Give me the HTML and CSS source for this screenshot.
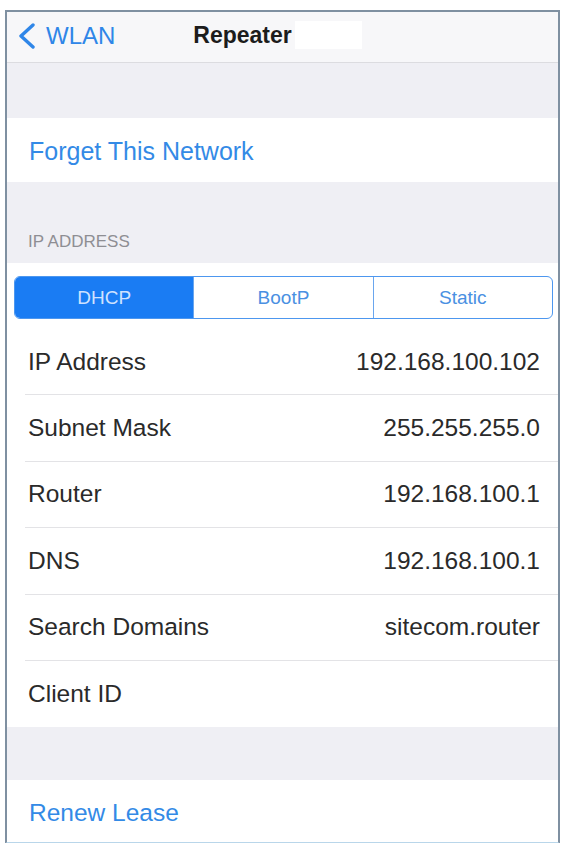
FILE: index.html
```html
<!DOCTYPE html>
<html lang="en">
<head>
  <meta charset="UTF-8">
  <title>Repeater</title>
  <link rel="stylesheet" href="styles.css">
</head>
<body>
  <div class="screen">
    <div class="navbar">
      <a class="back" href="#">
        <svg class="chevron" width="20" height="26" viewBox="0 0 20 26">
          <path d="M16 2 L4 13 L16 24" fill="none" stroke="currentColor" stroke-width="3.4" stroke-linecap="round" stroke-linejoin="round"/>
        </svg>
        <span>WLAN</span>
      </a>
      <div class="title">Repeater<span class="mask"></span></div>
      <div></div>
    </div>

    <div class="spacer"></div>

    <div class="cell action forget">Forget This Network</div>

    <div class="section-header">IP ADDRESS</div>

    <div class="segment-wrap">
      <div class="segmented">
        <div class="segment selected">DHCP</div>
        <div class="segment">BootP</div>
        <div class="segment">Static</div>
      </div>
    </div>

    <div class="group">
      <div class="row"><span>IP Address</span><span>192.168.100.102</span></div>
      <div class="row"><span>Subnet Mask</span><span>255.255.255.0</span></div>
      <div class="row"><span>Router</span><span>192.168.100.1</span></div>
      <div class="row"><span>DNS</span><span>192.168.100.1</span></div>
      <div class="row"><span>Search Domains</span><span>sitecom.router</span></div>
      <div class="row last"><span>Client ID</span><span></span></div>
    </div>

    <div class="spacer short"></div>

    <div class="cell action renew">Renew Lease</div>
  </div>
</body>
</html>
```

FILE: styles.css
```css
* {
  margin: 0;
  padding: 0;
  box-sizing: border-box;
}

body {
  font-family: 'Liberation Sans', Arial, sans-serif;
  background-color: #ffffff;
  color: #2a2a2a;
  overflow: hidden;
}

.screen {
  margin: 10px 0 0 5px;
  width: 555px;
  height: 834px;
  border: 2px solid #7f90a1;
  border-bottom-color: #b9d6ea;
  background-color: #efeff4;
  overflow: hidden;
}

/* top bar */
.navbar {
  height: 51px;
  background-color: #f7f7f9;
  border-bottom: 1px solid #dcdce0;
  display: grid;
  grid-template-columns: 1fr auto 1fr;
  align-items: center;
}

.back {
  display: flex;
  align-items: center;
  gap: 9px;
  padding-left: 10px;
  color: #2f86e8;
  text-decoration: none;
  font-size: 24px;
  margin-top: -3px;
}

.chevron {
  display: block;
}

.title {
  font-size: 23px;
  font-weight: bold;
  color: #1c1c1c;
  display: flex;
  align-items: center;
  margin: -4px 10px 0 0;
}

.mask {
  display: inline-block;
  width: 67px;
  height: 28px;
  margin-left: 3px;
  background-color: #ffffff;
}

.spacer {
  height: 55px;
}

.spacer.short {
  height: 53px;
}

.cell {
  background-color: #ffffff;
  height: 64px;
  display: flex;
  align-items: center;
  padding-left: 22px;
  font-size: 25px;
}

.action {
  color: #338ae6;
}

.forget {
  padding-top: 3px;
}

.renew {
  height: 62px;
  padding-top: 4px;
  font-size: 24.5px;
}

.section-header {
  height: 81px;
  display: flex;
  align-items: flex-end;
  padding: 0 0 11px 21px;
  font-size: 17px;
  line-height: 20px;
  color: #8e8e93;
}

/* DHCP / BootP / Static switch */
.segment-wrap {
  background-color: #ffffff;
  padding: 13px 5px 10px 7px;
}

.segmented {
  display: flex;
  height: 43px;
  border: 1.5px solid #4d97ef;
  border-radius: 6px;
  overflow: hidden;
}

.segment {
  flex: 1;
  display: flex;
  align-items: center;
  justify-content: center;
  font-size: 19px;
  color: #4a90e2;
  border-left: 1.5px solid #6aa6ee;
}

.segment:first-child {
  border-left: none;
}

.segment.selected {
  background-color: #1a7cf3;
  color: #cfe2ff;
}

.group {
  background-color: #ffffff;
}

.row {
  height: 66.4px;
  margin-left: 18px;
  padding: 0 18px 0 3px;
  display: flex;
  align-items: center;
  justify-content: space-between;
  font-size: 24.5px;
  border-bottom: 1px solid #e3e3e6;
}

.row.last {
  border-bottom: none;
}
```
